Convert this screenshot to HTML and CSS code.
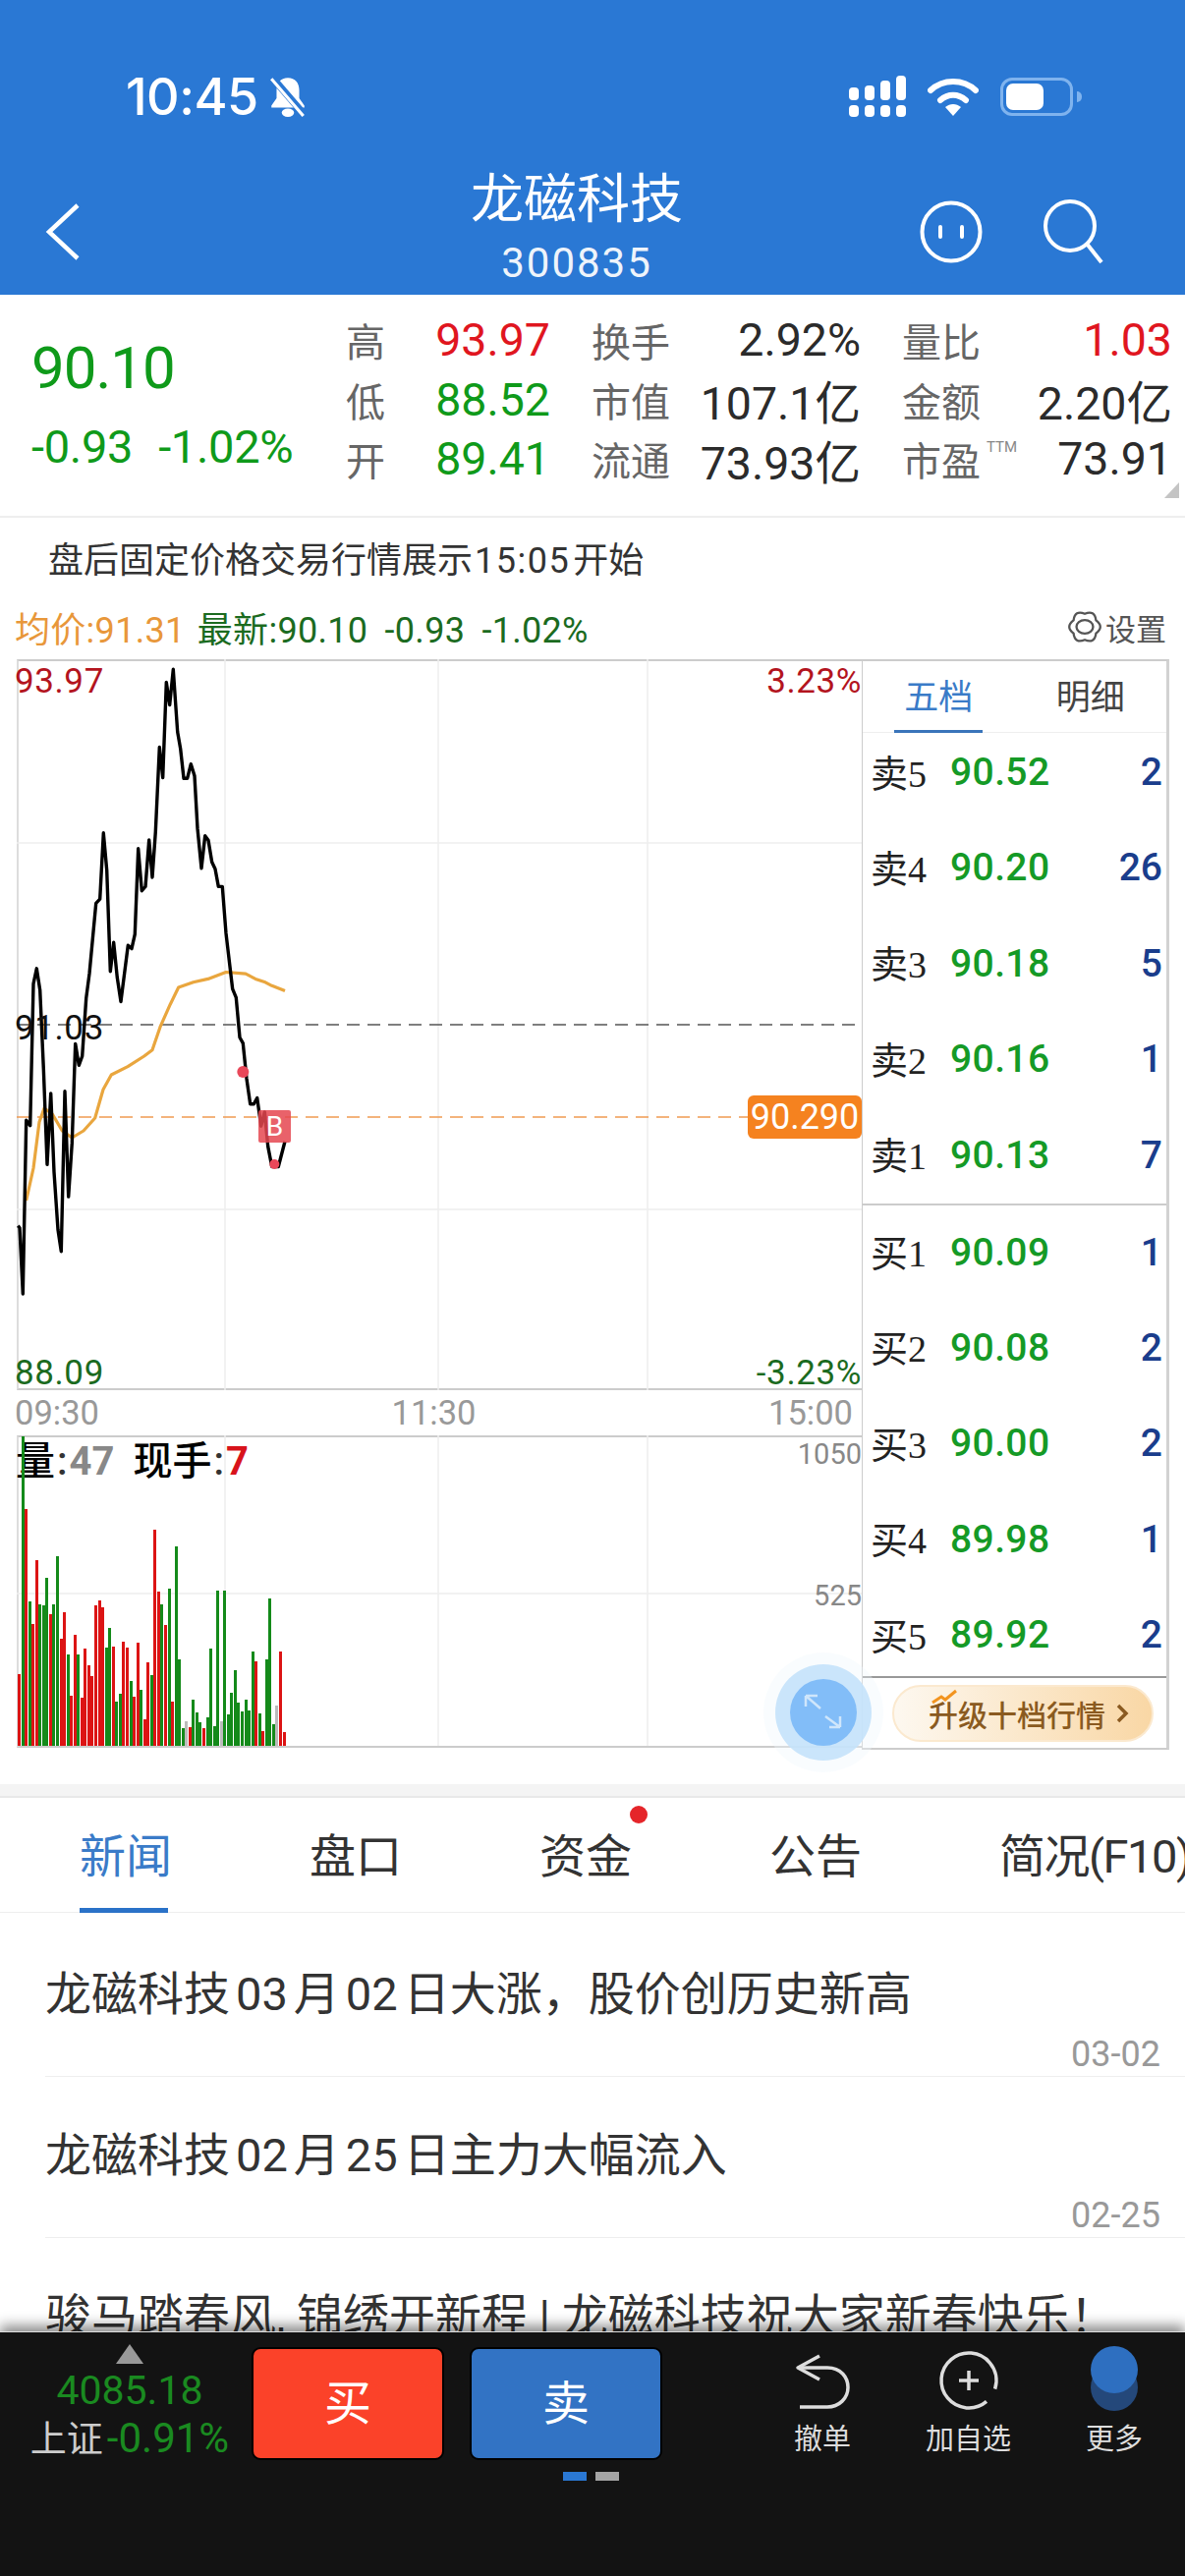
FILE: index.html
```html
<!DOCTYPE html>
<html lang="zh-CN">
<head>
  <meta charset="UTF-8">
  <meta name="viewport" content="width=device-width, initial-scale=1.0">
  <title>龙磁科技</title>
  <link rel="stylesheet" href="styles.css">
</head>
<body>
  <div class="page">
    <header class="header">
      <div class="status">
        <span class="clock">10:45</span>
        <svg class="bell" width="44" height="44" viewBox="0 0 40 42">
          <path d="M20 3c-7 0-11 5-11 12v8l-5 7v2h32v-2l-5-7v-8c0-7-4-12-11-12z" fill="#fff"/>
          <ellipse cx="20" cy="37" rx="6" ry="4" fill="#fff"/>
          <path d="M5 3l31 36" stroke="#2a78d4" stroke-width="7"/>
          <path d="M4 4l31 36" stroke="#fff" stroke-width="3"/>
        </svg>
        <div class="status-icons">
          <svg width="58" height="42" viewBox="0 0 58 42" fill="#fff">
            <rect x="0" y="12" width="10" height="13" rx="4"/>
            <rect x="16" y="10" width="10" height="15" rx="4"/>
            <rect x="32" y="5" width="10" height="20" rx="4"/>
            <rect x="48" y="0" width="10" height="25" rx="4"/>
            <rect x="0" y="30" width="10" height="12" rx="4"/>
            <rect x="16" y="30" width="10" height="12" rx="4"/>
            <rect x="32" y="30" width="10" height="12" rx="4"/>
            <rect x="48" y="30" width="10" height="12" rx="4"/>
          </svg>
          <svg width="52" height="40" viewBox="0 0 52 40">
            <path d="M3 14c13-12 33-12 46 0" fill="none" stroke="#fff" stroke-width="6" stroke-linecap="round"/>
            <path d="M13 24c8-7 18-7 26 0" fill="none" stroke="#fff" stroke-width="6" stroke-linecap="round"/>
            <path d="M18 31c5-4 11-4 16 0l-8 9z" fill="#fff"/>
          </svg>
          <div class="battery"><div class="battery-level"></div></div>
          <div class="battery-cap"></div>
        </div>
      </div>
      <div class="nav">
        <svg class="back" width="36" height="60" viewBox="0 0 36 60">
          <path d="M33 3L4 30l29 27" fill="none" stroke="#fff" stroke-width="4.5"/>
        </svg>
        <div class="title-box">
          <div class="title">龙磁科技</div>
          <div class="code">300835</div>
        </div>
        <div class="nav-icons">
          <svg width="66" height="66" viewBox="0 0 66 66" fill="none" stroke="#fff" stroke-width="4">
            <circle cx="33" cy="33" r="29.5"/>
            <path d="M22 28v10M44 28v10" stroke-linecap="round"/>
          </svg>
          <svg width="64" height="66" viewBox="0 0 64 66" fill="none" stroke="#fff" stroke-width="4">
            <circle cx="29" cy="27" r="25"/>
            <path d="M46 45l15 19"/>
          </svg>
        </div>
      </div>
    </header>

    <section class="quote">
      <div class="quote-main">
        <div class="last-price">90.10</div>
        <div class="last-change"><span>-0.93</span><span>-1.02%</span></div>
      </div>
      <div class="quote-grid">
        <div class="cell"><span class="label">高</span><span class="red">93.97</span></div>
        <div class="cell"><span class="label">换手</span><span>2.92%</span></div>
        <div class="cell"><span class="label">量比</span><span class="red">1.03</span></div>
        <div class="cell"><span class="label">低</span><span class="green">88.52</span></div>
        <div class="cell"><span class="label">市值</span><span>107.1亿</span></div>
        <div class="cell"><span class="label">金额</span><span>2.20亿</span></div>
        <div class="cell"><span class="label">开</span><span class="green">89.41</span></div>
        <div class="cell"><span class="label">流通</span><span>73.93亿</span></div>
        <div class="cell"><span class="label">市盈<sup class="ttm">TTM</sup></span><span>73.91</span></div>
      </div>
      <div class="corner"></div>
    </section>

    <div class="notice">盘后固定价格交易行情展示<span class="notice-time">15:05</span>开始</div>

    <div class="legend">
      <div>
        <span class="avg">均价:91.31</span>
        <span class="latest">最新:90.10</span>
        <span class="latest">-0.93</span>
        <span class="latest">-1.02%</span>
      </div>
      <div class="settings">
        <svg width="36" height="36" viewBox="0 0 34 34" fill="none" stroke="#555" stroke-width="2.2">
          <path d="M27.8 23.25Q26.5 33.5 17 29.5Q7.5 33.5 6.2 23.25Q-2 17 6.2 10.75Q7.5 .5 17 4.5Q26.5 .5 27.8 10.75Q36 17 27.8 23.25z"/>
          <ellipse cx="17" cy="17" rx="8" ry="6.5"/>
        </svg>
        <span>设置</span>
      </div>
    </div>

    <section class="market">
      <div class="charts">
        <div class="price-chart">
          <svg class="plot" width="860" height="744" viewBox="0 0 860 744">
            <g stroke="#eeeeee" stroke-width="1.5">
              <path d="M212 0V744M429 0V744M642 0V744M0 187H860M0 560H860"/>
            </g>
            <path d="M0 372H860" stroke="#555" stroke-width="1.5" stroke-dasharray="13 8"/>
            <path d="M0 466H746" stroke="#ef9a52" stroke-width="1.5" stroke-dasharray="13 8"/>
            <polyline fill="none" stroke="#e9a63e" stroke-width="3.2" stroke-linejoin="round" points="9.7,551 17,518 23,471 28,457 36.3,463 46.3,480 56.3,487 68,480 79.7,467 88,438 96.3,423 113,414.6 129.7,404 138,397.7 146.3,373.6 156.3,351.2 164.7,334 179.7,328.8 194.7,325.4 213,318.5 233,320.2 243,325.4 253,328.8 259.7,332.3 273,337.5"/>
            <polyline fill="none" stroke="#000" stroke-width="3.4" stroke-linejoin="round" points="1.3,576.6 3,578.7 6.3,646 9.7,469.3 13.7,474.7 17,330.4 20.3,314.8 23.7,336.7 27.3,416.7 31,514.3 34.7,441.9 38,521.9 42,580.8 45.3,602.7 49,439.8 52.7,547.1 56.3,492.4 59.7,391.4 63.3,413.3 66.7,404 70.7,345.1 74,319.9 80.7,248.3 84.7,244.1 88.3,176.8 91.7,214.6 95.3,317.8 98.7,288.3 102.3,324.1 106,348.5 113.3,291.2 117,294.6 120.3,279.9 123.7,192.8 127.3,235.7 131,231.5 134.7,184 138,222 141.3,175.6 145.3,89.5 148.7,120.5 152.3,23.4 155.7,46.5 159.3,10.3 163.7,74 166.7,91.3 170,121.2 173.7,121.2 177.3,106.7 181,118.8 184,172.2 188,212.8 191.7,179.8 195,184.2 198.7,206.6 202,213.5 205.3,231.4 209.3,231.4 213,278.9 219.7,335.7 223.3,344.4 227,385 230.3,390.8 234,427 237.7,452.8 241.3,452.8 244.7,446.6 248.7,475.2 252.3,461 255.7,495.9 259.7,516.5 266.3,516.5 273,490.7"/>
            <circle cx="230.3" cy="420" r="6" fill="#e9485a"/>
            <circle cx="262.3" cy="514" r="5" fill="#e9485a"/>
          </svg>
          <span class="axis-label top-left dark-red">93.97</span>
          <span class="axis-label top-right dark-red">3.23%</span>
          <span class="axis-label mid-left">91.03</span>
          <span class="axis-label bottom-left dark-green">88.09</span>
          <span class="axis-label bottom-right dark-green">-3.23%</span>
          <div class="trade-mark">B</div>
          <div class="price-tag">90.290</div>
        </div>
        <div class="time-axis"><span>09:30</span><span>11:30</span><span>15:00</span></div>
        <div class="vol-chart">
          <svg class="plot" width="860" height="316" viewBox="0 0 860 316">
            <path d="M212 0V316M429 0V316M642 0V316M0 161H860" stroke="#eeeeee" stroke-width="1.5"/>
          </svg>
          <div class="vol-title">量<span class="vol-colon">:</span><span class="vol-gray">47</span><span class="vol-now">现手<span class="vol-colon">:</span><span class="vol-red">7</span></span></div>
          <span class="vol-scale scale-top">1050</span>
          <span class="vol-scale scale-mid">525</span>
          <div class="bars">
            <i class="bar up" style="height:73px"></i><i class="bar down" style="height:315px"></i><i class="bar up" style="height:241px"></i><i class="bar down" style="height:147px"></i><i class="bar up" style="height:124px"></i><i class="bar up" style="height:189px"></i><i class="bar down" style="height:144px"></i><i class="bar down" style="height:143px"></i><i class="bar down" style="height:171px"></i><i class="bar up" style="height:134px"></i>
            <i class="bar down" style="height:144px"></i><i class="bar down" style="height:193px"></i><i class="bar up" style="height:109px"></i><i class="bar up" style="height:136px"></i><i class="bar down" style="height:93px"></i><i class="bar up" style="height:51px"></i><i class="bar up" style="height:113px"></i><i class="bar down" style="height:93px"></i><i class="bar up" style="height:49px"></i><i class="bar up" style="height:99px"></i>
            <i class="bar up" style="height:82px"></i><i class="bar up" style="height:71px"></i><i class="bar up" style="height:143px"></i><i class="bar up" style="height:148px"></i><i class="bar up" style="height:141px"></i><i class="bar down" style="height:100px"></i><i class="bar down" style="height:120px"></i><i class="bar up" style="height:101px"></i><i class="bar down" style="height:45px"></i><i class="bar down" style="height:53px"></i>
            <i class="bar up" style="height:106px"></i><i class="bar up" style="height:100px"></i><i class="bar down" style="height:66px"></i><i class="bar up" style="height:50px"></i><i class="bar up" style="height:105px"></i><i class="bar down" style="height:57px"></i><i class="bar up" style="height:27px"></i><i class="bar up" style="height:85px"></i><i class="bar down" style="height:72px"></i><i class="bar up" style="height:220px"></i>
            <i class="bar up" style="height:157px"></i><i class="bar down" style="height:144px"></i><i class="bar up" style="height:123px"></i><i class="bar down" style="height:160px"></i><i class="bar up" style="height:45px"></i><i class="bar down" style="height:203px"></i><i class="bar down" style="height:88px"></i><i class="bar down" style="height:18px"></i><i class="bar flat" style="height:25px"></i><i class="bar up" style="height:19px"></i>
            <i class="bar down" style="height:47px"></i><i class="bar down" style="height:34px"></i><i class="bar down" style="height:24px"></i><i class="bar up" style="height:18px"></i><i class="bar down" style="height:29px"></i><i class="bar down" style="height:99px"></i><i class="bar down" style="height:20px"></i><i class="bar down" style="height:158px"></i><i class="bar flat" style="height:25px"></i><i class="bar down" style="height:158px"></i>
            <i class="bar down" style="height:32px"></i><i class="bar down" style="height:54px"></i><i class="bar down" style="height:77px"></i><i class="bar down" style="height:44px"></i><i class="bar down" style="height:35px"></i><i class="bar down" style="height:47px"></i><i class="bar down" style="height:36px"></i><i class="bar down" style="height:96px"></i><i class="bar up" style="height:86px"></i><i class="bar down" style="height:33px"></i>
            <i class="bar up" style="height:15px"></i><i class="bar down" style="height:88px"></i><i class="bar down" style="height:150px"></i><i class="bar down" style="height:22px"></i><i class="bar flat" style="height:41px"></i><i class="bar up" style="height:96px"></i><i class="bar up" style="height:14px"></i>
          </div>
        </div>
      </div>

      <aside class="book">
        <div class="book-tabs">
          <div class="book-tab"><span class="book-tab-on">五档</span></div>
          <div class="book-tab">明细</div>
        </div>
        <div class="asks">
          <div class="level"><span class="side">卖<b>5</b></span><span class="level-price">90.52</span><span class="level-qty">2</span></div>
          <div class="level"><span class="side">卖<b>4</b></span><span class="level-price">90.20</span><span class="level-qty">26</span></div>
          <div class="level"><span class="side">卖<b>3</b></span><span class="level-price">90.18</span><span class="level-qty">5</span></div>
          <div class="level"><span class="side">卖<b>2</b></span><span class="level-price">90.16</span><span class="level-qty">1</span></div>
          <div class="level"><span class="side">卖<b>1</b></span><span class="level-price">90.13</span><span class="level-qty">7</span></div>
        </div>
        <div class="bids">
          <div class="level"><span class="side">买<b>1</b></span><span class="level-price">90.09</span><span class="level-qty">1</span></div>
          <div class="level"><span class="side">买<b>2</b></span><span class="level-price">90.08</span><span class="level-qty">2</span></div>
          <div class="level"><span class="side">买<b>3</b></span><span class="level-price">90.00</span><span class="level-qty">2</span></div>
          <div class="level"><span class="side">买<b>4</b></span><span class="level-price">89.98</span><span class="level-qty">1</span></div>
          <div class="level"><span class="side">买<b>5</b></span><span class="level-price">89.92</span><span class="level-qty">2</span></div>
        </div>
        <div class="upgrade-row">
          <div class="upgrade">
            <svg class="upgrade-spark" width="28" height="16" viewBox="0 0 28 16">
              <path d="M1 14l9-6 4 3 11-9" fill="none" stroke="#f2941f" stroke-width="3"/>
            </svg>
            <span>升级十档行情</span>
            <svg width="14" height="22" viewBox="0 0 14 22">
              <path d="M3 3l8 8-8 8" fill="none" stroke="#8a5a20" stroke-width="3.5"/>
            </svg>
          </div>
        </div>
      </aside>

      <svg class="float-btn" width="124" height="124" viewBox="0 0 124 124">
        <circle cx="62" cy="62" r="61" fill="#eef6fd" fill-opacity=".35"/>
        <circle cx="62" cy="62" r="49" fill="#c4e2fb" fill-opacity=".9"/>
        <circle cx="62" cy="62" r="34" fill="#82bdf8"/>
        <path d="M44 45l15 13M44 45v11M44 45h12M79 77L64 66M79 77V66M79 77H68" fill="none" stroke="#cfe6fb" stroke-width="2.5"/>
      </svg>
    </section>

    <div class="divider"></div>

    <nav class="tabs">
      <div class="tab tab-on">新闻</div>
      <div class="tab">盘口</div>
      <div class="tab tab-dot">资金<i class="red-dot"></i></div>
      <div class="tab">公告</div>
      <div class="tab tab-wide">简况(F10)</div>
    </nav>

    <section class="news">
      <article class="news-item">
        <h3>龙磁科技<span class="num">03</span>月<span class="num">02</span>日大涨，股价创历史新高</h3>
        <time>03-02</time>
      </article>
      <article class="news-item">
        <h3>龙磁科技<span class="num">02</span>月<span class="num">25</span>日主力大幅流入</h3>
        <time>02-25</time>
      </article>
      <article class="news-item">
        <h3>骏马踏春风, 锦绣开新程 | 龙磁科技祝大家新春快乐！</h3>
      </article>
    </section>

    <footer class="bottom">
      <div class="index">
        <div class="index-arrow"></div>
        <div class="index-value">4085.18</div>
        <div class="index-name">上证<span class="index-change">-0.91%</span></div>
      </div>
      <div class="trade">
        <div class="trade-btns">
          <div class="trade-btn buy">买</div>
          <div class="trade-btn sell">卖</div>
        </div>
        <div class="pager"><i class="pager-on"></i><i></i></div>
      </div>
      <div class="actions">
        <div class="action">
          <svg width="70" height="70" viewBox="0 0 70 70" fill="none" stroke="#ddd" stroke-width="3.5">
            <path d="M32 12L10 24l22 12" stroke-linejoin="round"/>
            <path d="M10 24H40C54 24 61 34 61 44C61 55 52 64 40 64H12"/>
          </svg>
          <span>撤单</span>
        </div>
        <div class="action">
          <svg width="70" height="70" viewBox="0 0 70 70" fill="none" stroke="#ddd" stroke-width="3.5">
            <circle cx="35" cy="37" r="28" stroke-dasharray="160 16" transform="rotate(50 35 37)"/>
            <path d="M35 27V47M25 37H45"/>
          </svg>
          <span>加自选</span>
        </div>
        <div class="action">
          <svg width="70" height="70" viewBox="0 0 70 70">
            <circle cx="35" cy="44" r="24" fill="#24487a"/>
            <circle cx="35" cy="26" r="24" fill="#2e6fc0"/>
          </svg>
          <span>更多</span>
        </div>
      </div>
    </footer>
  </div>
</body>
</html>
```

FILE: styles.css
```css
* {
  margin: 0;
  padding: 0;
  box-sizing: border-box;
}
body {
  font-family: Roboto, "Noto Sans CJK SC", sans-serif;
  background: #fff;
  color: #333;
}
.page {
  width: 1206px;
  height: 2622px;
  overflow: hidden;
  display: flex;
  flex-direction: column;
  position: relative;
}

/* header */
.header {
  height: 300px;
  background: #2a78d4;
  color: #fff;
  flex-shrink: 0;
}
.status {
  height: 150px;
  padding: 46px 0 0 128px;
  display: flex;
  align-items: center;
}
.clock {
  font-family: Inter, Roboto, sans-serif;
  font-size: 52px;
  font-weight: 500;
  letter-spacing: -.5px;
}
.bell {
  margin-left: 8px;
}
.status-icons {
  margin-left: auto;
  padding-right: 105px;
  display: flex;
  align-items: center;
}
.status-icons svg + svg {
  margin-left: 22px;
}
.battery {
  width: 74px;
  height: 39px;
  margin-left: 22px;
  border: 3px solid #7fb3ee;
  border-radius: 12px;
  padding: 3px;
}
.battery-level {
  width: 38px;
  height: 100%;
  background: #fff;
  border-radius: 7px;
}
.battery-cap {
  width: 5px;
  height: 11px;
  margin-left: 4px;
  background: #7fb3ee;
  border-radius: 0 5px 5px 0;
}
.nav {
  height: 150px;
  display: flex;
  align-items: flex-start;
}
.back {
  margin: 56px 0 0 46px;
}
.title-box {
  width: 210px;
  margin: 24px 0 0 400px;
  text-align: center;
}
.title {
  font-size: 54px;
  line-height: 60px;
  white-space: nowrap;
  margin: 0 -10px;
}
.code {
  margin-top: 12px;
  font-size: 42px;
  line-height: 44px;
  letter-spacing: 2px;
  white-space: nowrap;
  opacity: .92;
}
.nav-icons {
  margin: 53px 0 0 243px;
  display: flex;
  gap: 59px;
}

/* quote */
.quote {
  height: 227px;
  padding-left: 32px;
  border-bottom: 2px solid #eeeeee;
  display: flex;
  position: relative;
  flex-shrink: 0;
}
.quote-main {
  width: 320px;
  padding-top: 40px;
  color: #0f9a1a;
}
.last-price {
  font-size: 60px;
  line-height: 70px;
  letter-spacing: -1px;
}
.last-change {
  margin-top: 20px;
  font-size: 47px;
  line-height: 50px;
  letter-spacing: -.3px;
  display: flex;
  gap: 26px;
  white-space: nowrap;
}
.quote-grid {
  padding-top: 16px;
  display: grid;
  grid-template-columns: 208px 274px 275px;
  grid-auto-rows: 60.5px;
  column-gap: 42px;
  font-size: 46.5px;
  color: #2b2b2b;
}
.cell {
  display: flex;
  justify-content: space-between;
  align-items: center;
  white-space: nowrap;
}
.label {
  font-size: 40px;
  color: #666;
}
.ttm {
  font-size: 15px;
  line-height: 0;
  vertical-align: 24px;
  margin-left: 6px;
  color: #888;
}
.red {
  color: #e0161f;
}
.green {
  color: #0f9a1a;
}
.corner {
  position: absolute;
  right: 6px;
  top: 191px;
  width: 15px;
  height: 16px;
  background: #c4c4c4;
  clip-path: polygon(100% 0, 100% 100%, 0 100%);
}
.notice {
  height: 86px;
  padding: 16px 0 0 49px;
  font-size: 36px;
  line-height: 56px;
  flex-shrink: 0;
}
.notice-time {
  margin: 0 3px 0 2px;
  letter-spacing: 1.5px;
}
.num {
  margin: 0 6px;
}

/* chart legend */
.legend {
  height: 50px;
  padding: 0 19px 0 15px;
  display: flex;
  justify-content: space-between;
  align-items: center;
  font-size: 36px;
  letter-spacing: .3px;
  white-space: nowrap;
  flex-shrink: 0;
}
.avg {
  margin-right: -5px;
  color: #e8973a;
}
.latest {
  margin-left: 8px;
  color: #1b6b1f;
}
.settings {
  display: flex;
  align-items: center;
  gap: 3px;
  font-size: 31px;
  letter-spacing: 0;
  color: #555;
}

/* market */
.market {
  height: 1110px;
  margin-top: 8px;
  padding-left: 17px;
  display: flex;
  position: relative;
  flex-shrink: 0;
}
.charts {
  width: 860px;
}
.price-chart {
  height: 744px;
  border-left: 2px solid #ddd;
  border-top: 2px solid #ccc;
  border-bottom: 2px solid #ccc;
  position: relative;
}
.plot {
  position: absolute;
  left: -2px;
  top: -2px;
}
.axis-label {
  position: absolute;
  font-size: 35px;
  line-height: 40px;
  letter-spacing: .6px;
  color: #111;
}
.top-left {
  left: -4px;
  top: 1px;
}
.top-right {
  right: 0;
  top: 1px;
}
.mid-left {
  left: -4px;
  top: 354px;
}
.bottom-left {
  left: -4px;
  bottom: -5px;
}
.bottom-right {
  right: 0;
  bottom: -5px;
}
.dark-red {
  color: #b3141e;
}
.dark-green {
  color: #1b6b1f;
}
.trade-mark {
  position: absolute;
  left: 244px;
  top: 457px;
  width: 33px;
  height: 33px;
  background: rgba(229, 70, 80, .85);
  color: #fff;
  font-size: 28px;
  line-height: 33px;
  text-align: center;
  border-radius: 2px;
}
.price-tag {
  position: absolute;
  right: 0;
  top: 442px;
  width: 116px;
  height: 44px;
  background: #f5821f;
  color: #fff;
  font-size: 36px;
  line-height: 44px;
  text-align: center;
  border-radius: 6px;
}
.time-axis {
  height: 46px;
  margin-left: -2px;
  padding-right: 9px;
  display: flex;
  justify-content: space-between;
  align-items: center;
  font-size: 34.5px;
  color: #999;
}
.vol-chart {
  height: 318px;
  border-left: 2px solid #ddd;
  border-top: 2px solid #ccc;
  border-bottom: 2px solid #ccc;
  position: relative;
}
.vol-title {
  position: absolute;
  left: -3px;
  top: 2px;
  font-size: 40px;
  font-weight: 500;
  line-height: 46px;
  color: #000;
  white-space: nowrap;
}
.vol-colon {
  margin: 0 2px;
  color: #333;
}
.vol-gray {
  color: #888;
  font-weight: 700;
}
.vol-now {
  margin-left: 19px;
}
.vol-red {
  color: #d8131b;
  font-weight: 700;
}
.vol-scale {
  position: absolute;
  right: 0;
  font-size: 29px;
  line-height: 34px;
  color: #888;
}
.scale-top {
  top: 0;
}
.scale-mid {
  top: 144px;
}
.bars {
  position: absolute;
  left: -1px;
  bottom: 0;
  display: flex;
  align-items: flex-end;
  gap: .557px;
}
.bar {
  display: block;
  width: 3px;
}
.up {
  background: #dc1414;
}
.down {
  background: #148a1a;
}
.flat {
  background: #bbbbbb;
}

/* order book */
.book {
  width: 313px;
  height: 1110px;
  border: 1px solid #ccc;
  border-top-width: 2px;
  border-right: 3px solid #d2d2d2;
  border-bottom-width: 2px;
  display: flex;
  flex-direction: column;
  background: #fff;
}
.book-tabs {
  height: 73px;
  border-bottom: 1px solid #eee;
  display: flex;
  flex-shrink: 0;
}
.book-tab {
  flex: 1;
  text-align: center;
  font-size: 35px;
  line-height: 76px;
  color: #444;
}
.book-tab-on {
  display: inline-block;
  width: 90px;
  height: 73px;
  color: #3a7bc8;
  border-bottom: 3px solid #3a75ba;
}
.asks {
  padding-bottom: 9px;
  border-bottom: 2px solid #ccc;
  display: flex;
  flex-direction: column;
  gap: 17.4px;
  flex-shrink: 0;
}
.bids {
  padding-top: 8px;
  padding-bottom: 2px;
  border-bottom: 2px solid #999;
  display: flex;
  flex-direction: column;
  gap: 17.4px;
  flex-shrink: 0;
}
.level {
  height: 80px;
  padding: 0 4px 0 10px;
  display: grid;
  grid-template-columns: 79px 1fr auto;
  align-items: center;
  white-space: nowrap;
}
.side {
  font-size: 38px;
  color: #222;
  margin: -4px 0 0 -2px;
}
.side b {
  font-family: "Liberation Serif", serif;
  font-weight: 400;
}
.level-price {
  font-size: 39px;
  font-weight: 500;
  letter-spacing: .4px;
  color: #159a26;
}
.level-qty {
  font-size: 39px;
  font-weight: 500;
  color: #1a3d8c;
}
.upgrade-row {
  flex: 1;
  display: flex;
  align-items: center;
  padding-left: 30px;
}
.upgrade {
  width: 266px;
  height: 58px;
  border: 2px solid #fbe9cf;
  border-radius: 29px;
  background: linear-gradient(to right, #fdf8f0, #f9d7a5);
  padding-left: 35px;
  display: flex;
  align-items: center;
  gap: 10px;
  font-size: 30px;
  font-weight: 500;
  color: #8a5a20;
  white-space: nowrap;
  position: relative;
}
.upgrade-spark {
  position: absolute;
  left: 38px;
  top: 2px;
}
.float-btn {
  position: absolute;
  left: 776px;
  top: 1010px;
}

/* tabs and news */
.divider {
  height: 14px;
  margin-top: 35px;
  background: #f4f4f4;
  border-bottom: 2px solid #e8e8e8;
  flex-shrink: 0;
}
.tabs {
  height: 117px;
  padding-left: 81px;
  border-bottom: 1px solid #eee;
  display: flex;
  gap: 144px;
  flex-shrink: 0;
}
.tab {
  width: 90px;
  height: 117px;
  padding-top: 30px;
  font-size: 47px;
  line-height: 60px;
  color: #333;
  white-space: nowrap;
  position: relative;
  flex-shrink: 0;
}
.tab-wide {
  letter-spacing: -1.5px;
}
.tab-on {
  color: #3a7bc8;
  border-bottom: 5px solid #2a72c8;
}
.red-dot {
  position: absolute;
  left: 92px;
  top: 8px;
  width: 18px;
  height: 18px;
  background: #e5252a;
  border-radius: 50%;
}
.news {
  flex: 1;
  min-height: 0;
  overflow: hidden;
  padding-top: 3px;
}
.news-item {
  margin-left: 46px;
  padding: 50px 25px 2px 0;
  border-bottom: 1px solid #eee;
}
.news-item h3 {
  font-size: 47px;
  font-weight: 400;
  line-height: 60px;
  white-space: nowrap;
}
.news-item time {
  display: block;
  margin-top: 11px;
  font-size: 36px;
  line-height: 40px;
  text-align: right;
  color: #999;
}
.bottom {
  height: 249px;
  background: #131313;
  border-top: 1px solid #ddd;
  box-shadow: 0 -6px 12px rgba(0, 0, 0, .45);
  padding-left: 28px;
  display: flex;
  position: relative;
  flex-shrink: 0;
  color: #ddd;
}
.index {
  width: 208px;
  padding-top: 12px;
  display: flex;
  flex-direction: column;
  align-items: center;
  flex-shrink: 0;
  white-space: nowrap;
}
.index-arrow {
  width: 28px;
  height: 20px;
  background: #999;
  clip-path: polygon(50% 0, 100% 100%, 0 100%);
}
.index-value {
  margin-top: 5px;
  font-size: 41px;
  line-height: 44px;
  color: #1a8a20;
}
.index-name {
  margin-top: 5px;
  font-size: 37px;
  line-height: 44px;
  color: #ccc;
}
.index-change {
  margin-left: 4px;
  font-size: 42px;
  color: #1a8a20;
}
.trade {
  margin-left: 22px;
  padding-top: 17px;
}
.trade-btns {
  display: flex;
  gap: 30px;
}
.trade-btn {
  width: 192px;
  height: 111px;
  border-radius: 7px;
  box-shadow: 0 0 0 2px #000;
  font-size: 48px;
  line-height: 111px;
  text-align: center;
  color: #fff;
}
.buy {
  background: #fb4229;
}
.sell {
  background: #3273c4;
}
.pager {
  margin-top: 14px;
  padding-left: 315px;
  display: flex;
  gap: 9px;
}
.pager i {
  width: 24px;
  height: 9px;
  background: #a5a5a5;
}
.pager .pager-on {
  background: #2a78d4;
}
.actions {
  margin-left: 105px;
  display: flex;
  gap: 28.5px;
  padding-top: 12px;
}
.action {
  width: 120px;
  display: flex;
  flex-direction: column;
  align-items: center;
  font-size: 29px;
  line-height: 40px;
  white-space: nowrap;
}
.action span {
  margin-top: 7px;
}
```
